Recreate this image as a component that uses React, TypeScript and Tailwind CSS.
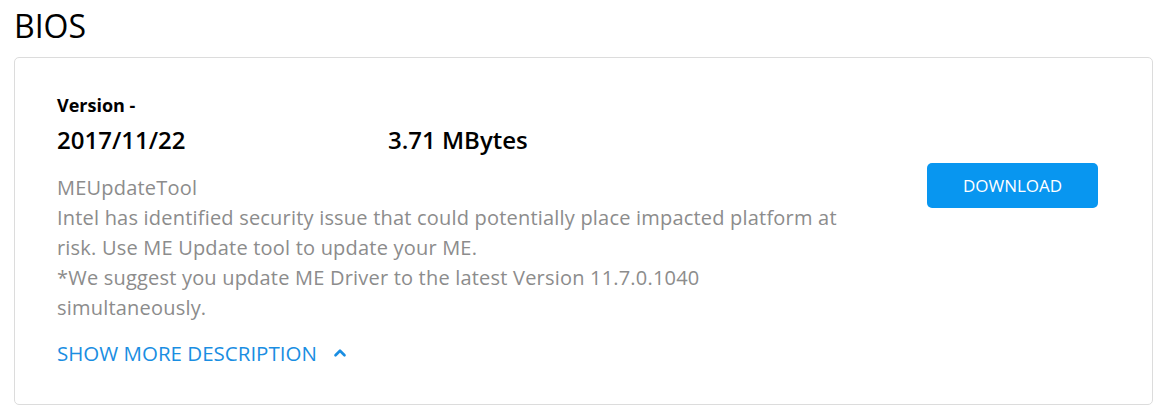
import { ChevronUp } from "lucide-react";

const descriptionLines = [
  "Intel has identified security issue that could potentially place impacted platform at",
  "risk. Use ME Update tool to update your ME.",
  "*We suggest you update ME Driver to the latest Version 11.7.0.1040",
  "simultaneously.",
];

export default function App() {
  return (
    <div className="min-h-[420px] bg-white px-[14px] font-['Open_Sans',sans-serif] text-black">
      <h1 className="pt-[6px] text-[32px] leading-[40px] font-normal">BIOS</h1>

      <div className="mt-[11px] flex h-[348px] w-[1139px] items-start rounded-[5px] border border-[#dcdcdc] pt-[35px] pr-[54px] pl-[42px]">
        <div className="flex-1">
          <div className="text-[18px] leading-[24px] font-bold">Version -</div>
          <div className="mt-[7px] flex text-[24px] leading-[32px] font-semibold">
            <span className="w-[331px]">2017/11/22</span>
            <span>3.71 MBytes</span>
          </div>

          <div className="mt-[17px] text-[20px] leading-[30px] tracking-[0.2px] text-[#8c8c8c]">
            <div>MEUpdateTool</div>
            {descriptionLines.map((line) => (
              <div key={line} className="whitespace-nowrap">
                {line}
              </div>
            ))}
          </div>

          <button className="mt-[15px] flex items-center gap-[14px] text-[20.5px] leading-[30px] text-[#1a8ee2]">
            SHOW MORE DESCRIPTION
            <ChevronUp className="h-[18px] w-[18px]" strokeWidth={3.5} />
          </button>
        </div>

        <button className="mt-[70px] h-[45px] w-[171px] rounded-[5px] bg-[#0896f0] text-[17px] text-white">
          DOWNLOAD
        </button>
      </div>
    </div>
  );
}
